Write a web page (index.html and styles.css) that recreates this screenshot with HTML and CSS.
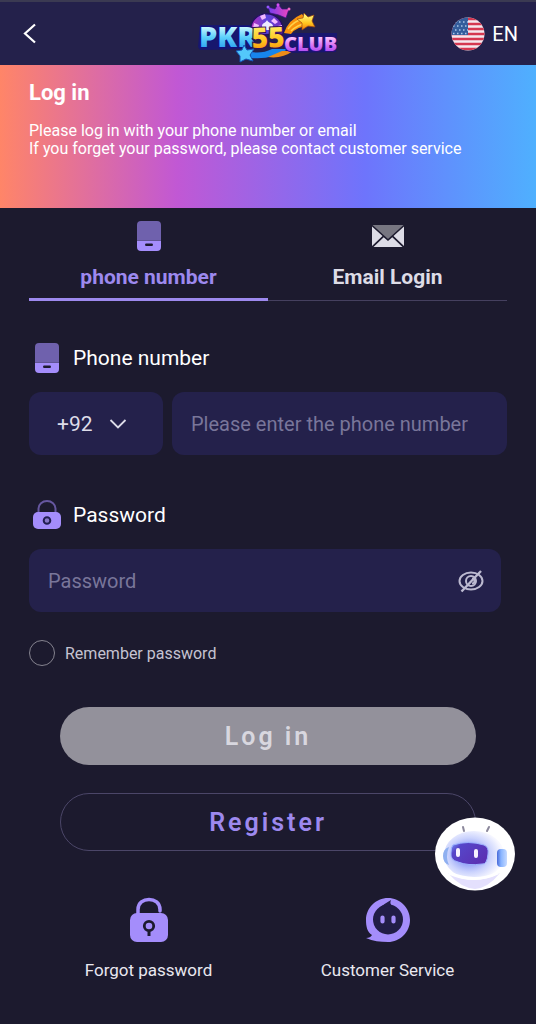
FILE: index.html
```html
<!DOCTYPE html>
<html lang="en">
<head>
<meta charset="utf-8">
<meta name="viewport" content="width=device-width, initial-scale=1">
<title>Log in - PKR55CLUB</title>
<link rel="stylesheet" href="styles.css">
</head>
<body>
<svg width="0" height="0" class="defs" aria-hidden="true">
  <symbol id="phone-icon" viewBox="0 0 26 32">
    <path d="M1 20V5a4 4 0 0 1 4-4h16a4 4 0 0 1 4 4v15z" fill="#6f61ad"/>
    <path d="M1 20.500h24V27a4 4 0 0 1-4 4H5a4 4 0 0 1-4-4z" fill="#a48dfb"/>
    <rect x="9" y="23.500" width="8" height="2.500" rx="1.200" fill="#1c1a2e"/>
  </symbol>
</svg>
<header class="topbar">
  <button class="back" type="button" aria-label="Back">
    <svg width="16" height="22" viewBox="0 0 16 22"><path d="M13 1.500L3 10.500l10 9" fill="none" stroke="#fff" stroke-width="2.200"/></svg>
  </button>
  <svg class="logo" width="144" height="62" viewBox="0 0 144 62" role="img" aria-label="PKR55CLUB">
    <defs>
      <linearGradient id="lg-blue" x1="0" y1="0" x2="0" y2="1"><stop offset=".25" stop-color="#d5fbff"/><stop offset=".55" stop-color="#5bd0fb"/><stop offset=".85" stop-color="#2a9df0"/></linearGradient>
      <linearGradient id="lg-gold" x1="0" y1="0" x2="0" y2="1"><stop offset=".2" stop-color="#fff06a"/><stop offset=".6" stop-color="#ffc51e"/><stop offset="1" stop-color="#f47b0a"/></linearGradient>
      <linearGradient id="lg-pink" x1="0" y1="0" x2="0" y2="1"><stop offset=".2" stop-color="#ffd4ff"/><stop offset=".55" stop-color="#dc76f5"/><stop offset=".9" stop-color="#9a3cf0"/></linearGradient>
      <linearGradient id="lg-chip"><stop offset="0" stop-color="#bd2fbd"/><stop offset=".5" stop-color="#5a45dc"/><stop offset="1" stop-color="#7c2bbd"/></linearGradient>
      <linearGradient id="lg-crown"><stop offset="0" stop-color="#713df0"/><stop offset="1" stop-color="#ed45bd"/></linearGradient>
    </defs>
    <path d="M2 44L4 22H56V46L4 47zM88 34L90 30H141L140 49L90 50z" fill="#17176e"/>
    <path d="M55 32C50 4 90 4 87 31z" fill="url(#lg-chip)" stroke="#231062" stroke-width="1.500"/>
    <path d="M58 20l5 2-1 4-5-1zM64 13l5-2 1 4-4 2zM78 15l4 4-3 2-4-3zM82 23l4-1v4h-4z" fill="#f1baff"/>
    <path d="M71 17c-1 3-5 3-5 6 0 3 4 3 4 1l-1 3h5l-2-3c1 2 5 1 5-1 0-3-5-3-6-6z" fill="#eeeaff"/>
    <path d="M74 10L72 4l7 2 3-5 4 5 7 0-3 9q-8-4-16-5z" fill="url(#lg-crown)" stroke="#391184" stroke-width=".7"/>
    <circle cx="72" cy="4" r="1.500" fill="#9455ff"/><circle cx="82" cy="1.800" r="1.500" fill="#d14df0"/><circle cx="93" cy="6" r="1.500" fill="#ed67c9"/>
    <path d="M88 30Q92 17 106 11l8 12Q101 23 95 31z" fill="#f8920c"/>
    <path d="M92 26Q98 18 109 15M95 28Q101 22 111 20" fill="none" stroke="#ffd24a" stroke-width="1.500"/>
    <path d="M108 10l4 4 6-2-2 6 3 6-7-1-6 4v-7l-5-4 6-1z" fill="url(#lg-gold)" stroke="#9b4911" stroke-width=".7"/>
    <path d="M55 55Q76 57 92 46H76Q66 51 55 49z" fill="#1785ed"/>
    <path d="M72 54Q86 56 97 48H86z" fill="#ee8c18"/>
    <g class="logo-text">
      <text x="3" y="44" font-size="29" fill="url(#lg-blue)" stroke="#101080">PKR</text>
      <text x="56" y="45" font-size="28" fill="url(#lg-gold)" stroke="#331052" transform="rotate(-2 56 45)">55</text>
      <text x="88" y="48" font-size="20" fill="url(#lg-pink)" stroke="#241078">CLUB</text>
    </g>
    <path d="M48 42l3 5 7-1-4 6 3 6-7-2-6 3v-6l-4-5 6-1z" fill="#53c8fa" stroke="#1556ba"/>
  </svg>
  <button class="lang" type="button">
    <svg width="34" height="34" viewBox="0 0 34 34" aria-hidden="true">
      <clipPath id="flag-clip"><circle cx="17" cy="17" r="16.500"/></clipPath>
      <g clip-path="url(#flag-clip)">
        <path fill="#f4e8ee" d="M0 0h34v34H0z"/>
        <path d="M0 2h34M0 7h34M0 12h34M0 17h34M0 22h34M0 27h34M0 32h34" stroke="#d53750" stroke-width="2.600"/>
        <path fill="#345d9c" d="M0 0h17v18H0z"/>
        <path d="M4 5h13M2 9h15M4 13h13M2 16.500h15" stroke="#a9c6e8" stroke-width="1.300" stroke-dasharray="1.500 2.500"/>
      </g>
    </svg>
    <span>EN</span>
  </button>
</header>
<section class="hero">
  <h1>Log in</h1>
  <p>Please log in with your phone number or email<br>If you forget your password, please contact customer service</p>
</section>
<main>
  <div class="tabs" role="tablist">
    <button class="tab active" type="button" role="tab" aria-selected="true">
      <svg width="26" height="32"><use href="#phone-icon"/></svg>
      <span>phone number</span>
    </button>
    <button class="tab" type="button" role="tab" aria-selected="false">
      <svg width="34" height="32" viewBox="0 0 34 32"><path d="M1.500 5h31L17 19z" fill="#777681"/><path d="M1 6.500L11.500 16 1 26zM33 6.500L22.500 16 33 26zM2.500 27L12.700 17.200 17 21l4.300-3.800L31.500 27z" fill="#dddce6"/></svg>
      <span>Email Login</span>
    </button>
  </div>
  <form>
    <label class="field-label" for="phone"><svg width="26" height="32"><use href="#phone-icon"/></svg>Phone number</label>
    <div class="phone-row">
      <div class="code">
        <select aria-label="Country code"><option>+92</option></select>
        <svg width="18" height="12" viewBox="0 0 18 12" aria-hidden="true"><path d="M1.500 2L9 9.500 16.500 2" fill="none" stroke="#dddce8" stroke-width="1.800"/></svg>
      </div>
      <input class="box" id="phone" type="tel" placeholder="Please enter the phone number">
    </div>
    <label class="field-label second" for="password">
      <svg width="30" height="32" viewBox="0 0 30 32"><path d="M6.500 14V9.500a8.500 7.500 0 0 1 17 0V14" fill="none" stroke="#6657a0" stroke-width="2"/><rect x="1" y="13" width="28" height="17" rx="5" fill="#a48dfb"/><circle cx="15" cy="21.500" r="3.300" fill="#8878c8" stroke="#211d50" stroke-width="2"/></svg>
      Password
    </label>
    <div class="box password-box">
      <input id="password" type="password" placeholder="Password">
      <button type="button" aria-label="Show password">
        <svg width="28" height="24" viewBox="0 0 28 24" fill="none" stroke="#bcbad0" stroke-width="2"><ellipse cx="14" cy="12" rx="11.500" ry="8.500"/><circle cx="14" cy="12" r="5"/><path d="M15 9.500a2.500 2.500 0 0 1 0 5"/><path d="M4.500 22.500L24 2" stroke-width="2.400"/></svg>
      </button>
    </div>
    <label class="remember"><input type="checkbox">Remember password</label>
    <div class="actions">
      <button class="login" type="submit">Log in</button>
      <button class="register" type="button">Register</button>
    </div>
  </form>
  <nav class="help">
    <a href="#forgot">
      <svg width="46" height="46" viewBox="0 0 46 46"><path d="M12 18v-5.500c0-13.500 22-13.500 22 0V14" fill="none" stroke="#a48dfb" stroke-width="3.500" stroke-linecap="round"/><rect x="4" y="16" width="38" height="29" rx="7" fill="#a48dfb"/><circle cx="23" cy="29" r="4.700" fill="none" stroke="#1c1a2e" stroke-width="2.800"/><path d="M23 33.500v5.500" stroke="#1c1a2e" stroke-width="3"/></svg>
      Forgot password
    </a>
    <a href="#service">
      <svg width="46" height="46" viewBox="0 0 46 46"><path d="M23 1C35 1 45 11 45 23S35 45 23 45C15 45 8 44 1 41c3 0 5-1 6-3C2 35 1 29 1 23 1 11 11 1 23 1z" fill="#a48dfb"/><circle cx="23" cy="22.500" r="15" fill="#211d46"/><path d="M15 10.500Q19 7 26 3q-2 4 2 6z" fill="#211d46"/><path d="M17.500 20.500v4M28.500 20.500v4" stroke="#a48dfb" stroke-width="4.200" stroke-linecap="round"/></svg>
      Customer Service
    </a>
  </nav>
  <button class="assistant" type="button" aria-label="Chat assistant">
    <svg width="80" height="74" viewBox="0 0 80 74">
      <defs>
        <radialGradient id="bot-head" cx=".42" cy=".5" r=".55"><stop offset=".35" stop-color="#98a6f8"/><stop offset=".65" stop-color="#cbd3fd"/><stop offset="1" stop-color="#f8f8ff"/></radialGradient>
        <linearGradient id="bot-visor" x2="1" y2=".6"><stop offset="0" stop-color="#7b9cff"/><stop offset=".25" stop-color="#5646c9"/><stop offset="1" stop-color="#5b31b3"/></linearGradient>
        <linearGradient id="bot-ear"><stop offset="0" stop-color="#4768d8"/><stop offset=".4" stop-color="#88b4ff"/><stop offset="1" stop-color="#c6daff"/></linearGradient>
      </defs>
      <ellipse cx="40" cy="37" rx="40" ry="36.500" fill="#fff"/>
      <ellipse cx="39" cy="38" rx="30" ry="24" fill="url(#bot-head)"/>
      <path d="M13 56Q39 70 65 56Q53 71 40 72 26 71 13 56z" fill="#e4e0fd"/>
      <path d="M14 56Q40 67 63 56" fill="none" stroke="#fff" stroke-width="3"/>
      <path d="M14 30q-6 2-6 9t6 9q-4-8 0-18z" fill="#8fb0f0"/>
      <rect x="62" y="32" width="10" height="18" rx="4" fill="url(#bot-ear)"/>
      <path d="M18 28Q33 23 49 28q5 2 4 9-1 11-6 10-14 2-24-2-8-2-7-9 0-6 2-8z" fill="url(#bot-visor)" stroke="#9eb3ff"/>
      <path d="M23 33v5M41 34v5" stroke="#f7f3ff" stroke-width="4" stroke-linecap="round"/>
      <path d="M29 14l-1-4M52 14l2-4" stroke="#8b879b" stroke-width="2" stroke-linecap="round"/>
    </svg>
  </button>
</main>
</body>
</html>
```
FILE: styles.css
```css
* { box-sizing: border-box; }
body {
  margin: 0;
  min-height: 100vh;
  background: #1c1a2e;
  color: #fff;
  font-family: Roboto, "Liberation Sans", sans-serif;
}
button, input, select { font: inherit; color: inherit; }
button { padding: 0; border: 0; background: none; cursor: pointer; }
svg { display: block; flex: none; }
.defs { position: absolute; }

.topbar {
  display: grid;
  grid-template-columns: 1fr auto 1fr;
  align-items: center;
  height: 65px;
  padding: 0 18px;
  border-top: 2px solid #3b3a52;
  background: #24214b;
}
.back { justify-self: start; padding: 0 4px; }
.logo-text {
  font-family: "Open Sans", "Noto Sans", sans-serif;
  font-weight: 800;
  stroke-width: 2px;
  paint-order: stroke;
}
.lang {
  display: flex;
  align-items: center;
  justify-self: end;
  gap: 7px;
  font-size: 20px;
}

.hero {
  height: 143px;
  padding: 14px 29px;
  background: linear-gradient(90deg, #ff8568, #c158d4 33%, #6e74fc 68%, #4fb0fe);
}
.hero h1 { margin: 0 0 16px; font-size: 22px; line-height: 27px; font-weight: 700; }
.hero p { margin: 0; font-size: 16px; line-height: 18px; }

main { position: relative; padding: 12px 29px 40px; }
.tabs { display: grid; grid-template-columns: 1fr 1fr; }
.tab {
  display: flex;
  flex-direction: column;
  align-items: center;
  gap: 12px;
  height: 81px;
  border-bottom: 1px solid #45405f;
  color: #dddce6;
  font-size: 21px;
  font-weight: 700;
  line-height: 26px;
}
.tab.active { border-bottom: 3px solid #9d89ee; color: #9d89ee; }

.field-label {
  display: grid;
  grid-template-columns: 36px auto;
  justify-content: start;
  align-items: center;
  gap: 8px;
  margin: 41px 0 18px;
  font-size: 21px;
  line-height: 32px;
}
.field-label svg { justify-self: center; }
.second { margin-top: 44px; }
.phone-row {
  display: grid;
  grid-template-columns: 134px minmax(0, 1fr);
  gap: 9px;
}
.code { position: relative; }
.code select {
  width: 100%;
  height: 63px;
  padding: 0 28px;
  border: 0;
  border-radius: 12px;
  background: #24214b;
  color: #dddce8;
  font-size: 21px;
  appearance: none;
}
.code svg { position: absolute; right: 36px; top: 26px; pointer-events: none; }
.box {
  width: 100%;
  height: 63px;
  padding: 0 19px;
  border: 0;
  border-radius: 12px;
  background: #24214b;
  font-size: 20px;
}
::placeholder { color: #79769a; opacity: 1; }
.password-box {
  display: flex;
  align-items: center;
  width: calc(100% - 6px);
  padding-right: 16px;
}
.password-box input { flex: 1; min-width: 0; padding: 0; border: 0; background: none; }

.remember {
  display: flex;
  align-items: center;
  gap: 10px;
  margin: 28px 0 41px;
  color: #c5c3d1;
  font-size: 16px;
}
.remember input {
  width: 26px;
  height: 26px;
  margin: 0;
  border: 1px solid #85838f;
  border-radius: 50%;
  appearance: none;
}
.actions { display: grid; gap: 28px; padding: 0 31px; }
.actions button {
  height: 58px;
  border-radius: 29px;
  font-size: 25px;
  font-weight: 600;
  letter-spacing: 3px;
}
.login { background: #93919b; color: #d8d7df; }
.actions .register { border: 1px solid #4b4668; color: #9d89ee; }

.help { display: grid; grid-template-columns: 1fr 1fr; margin-top: 46px; }
.help a {
  display: flex;
  flex-direction: column;
  align-items: center;
  gap: 17px;
  color: #e9e8f0;
  font-size: 17px;
  line-height: 20px;
  text-decoration: none;
}
.assistant { position: absolute; right: 21px; bottom: 129px; }
```
